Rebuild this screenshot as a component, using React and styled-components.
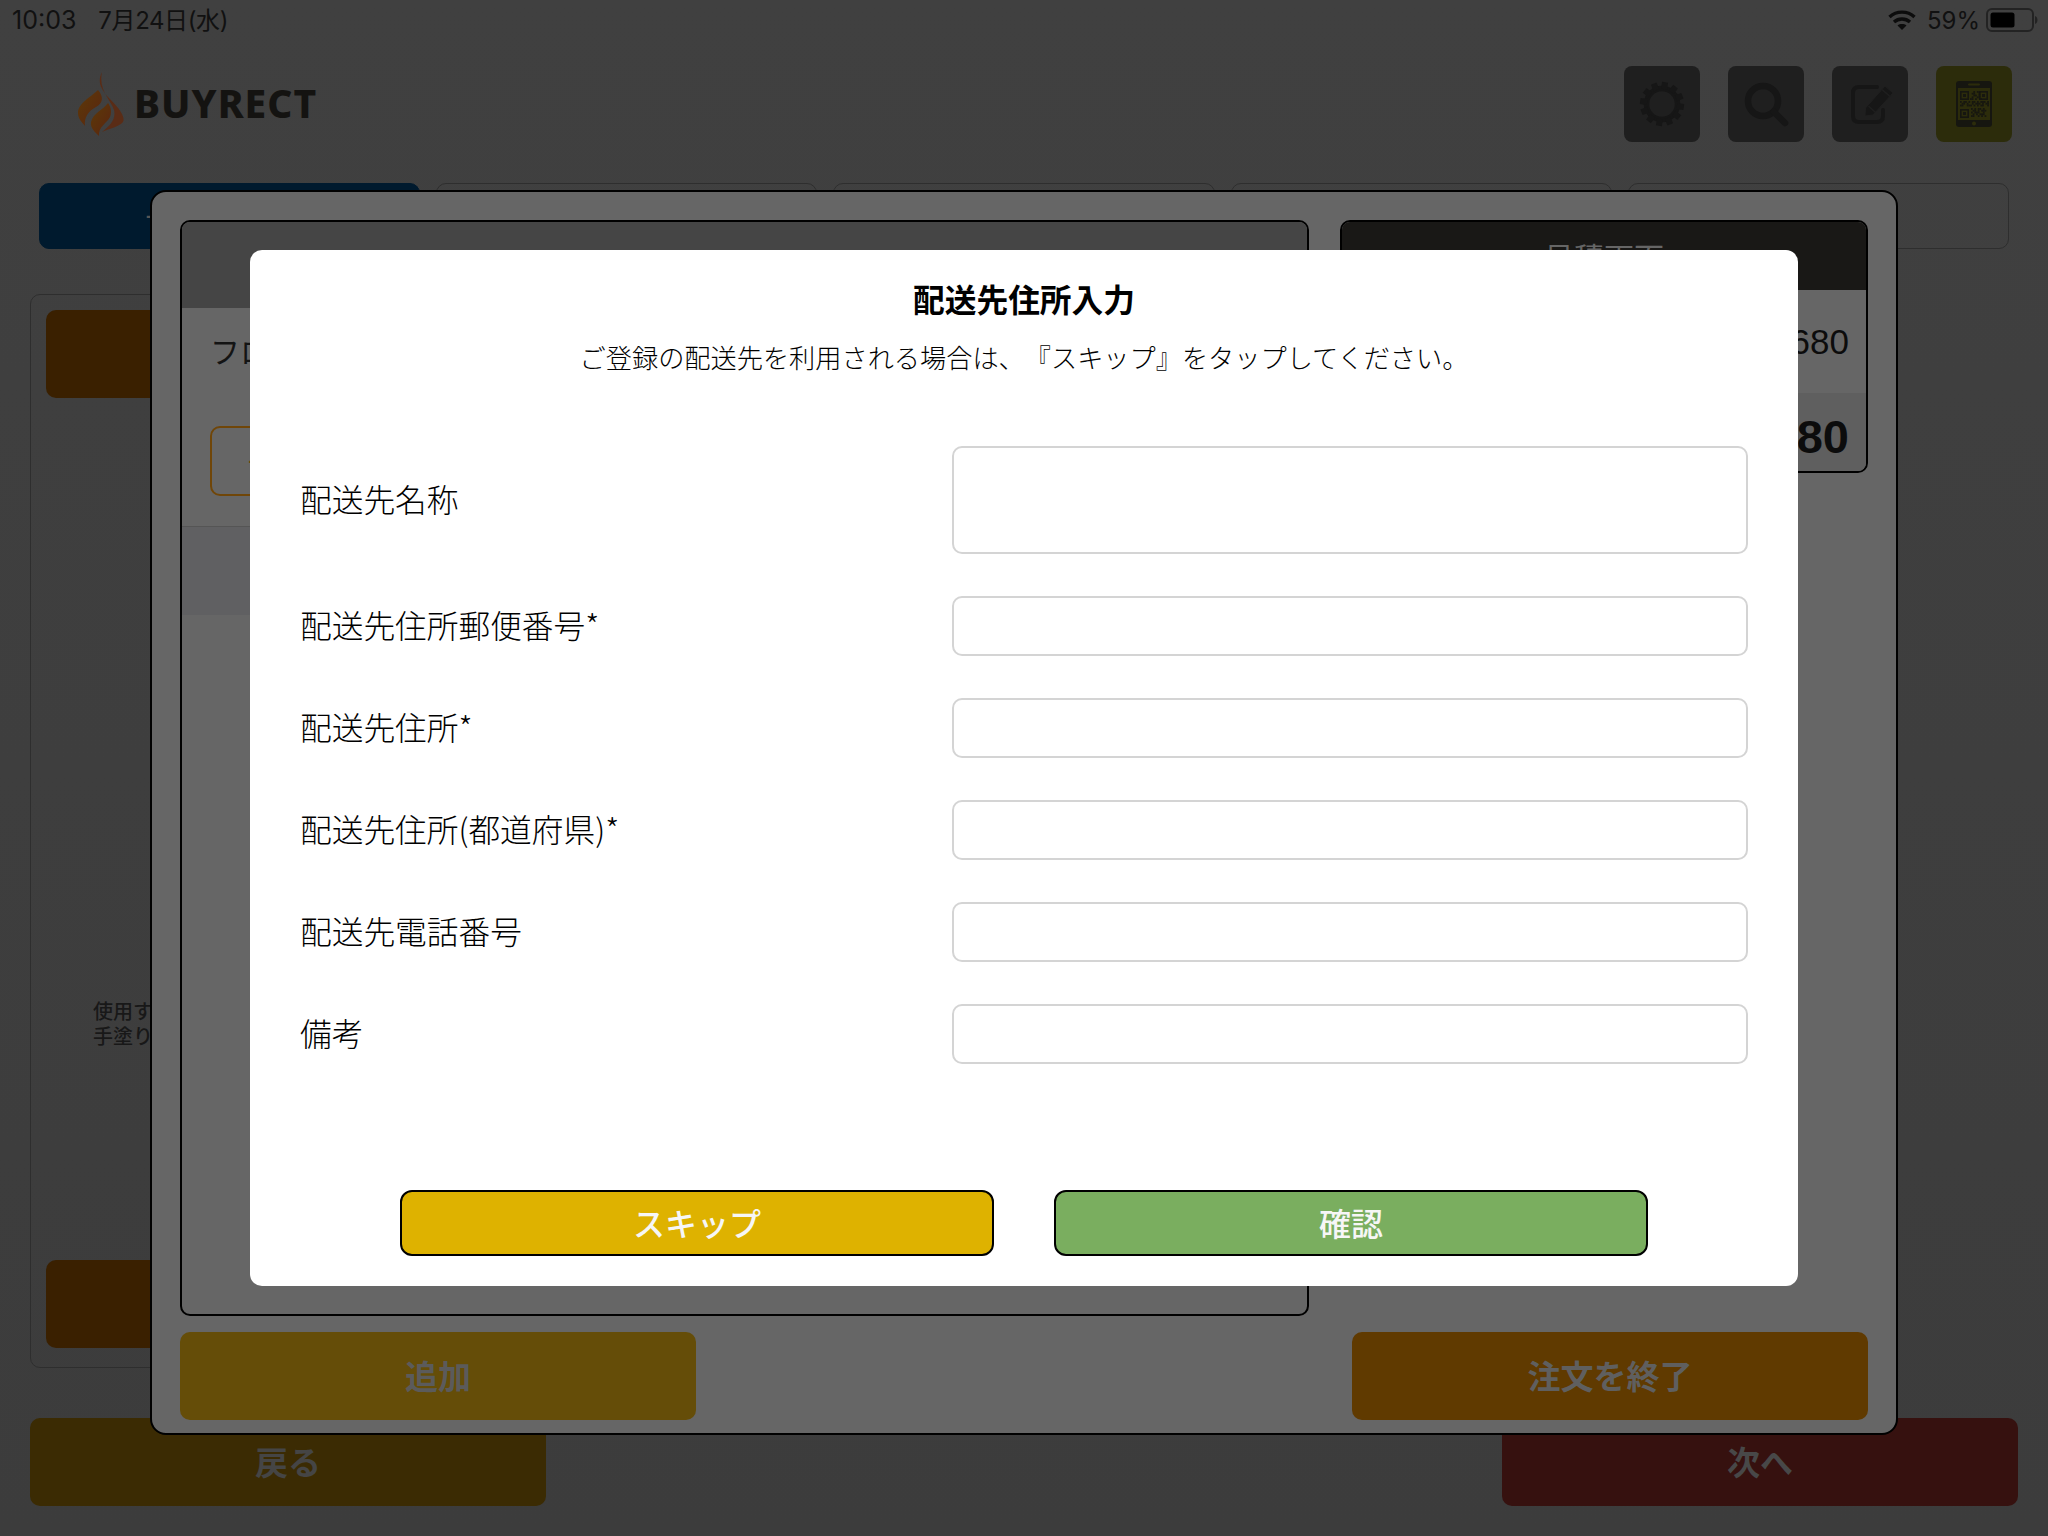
import React from "react";
import styled, { createGlobalStyle } from "styled-components";

const Global = createGlobalStyle`
html, body { margin: 0; padding: 0; background: #3e3e3e; }
* { box-sizing: border-box; }
body { font-family: "Noto Sans CJK JP", "Noto Sans", sans-serif; text-spacing-trim: space-all; font-feature-settings: "palt" 0; }
`;

const Page = styled.div`
position: relative;
width: 2048px;
height: 1536px;
overflow: hidden;
display: flex;
flex-direction: column;
background: linear-gradient(#404040, #3c3c3c);
`;

const StatusBar = styled.div`
height: 40px;
padding: 0 10px 0 12px;
display: flex;
align-items: center;
justify-content: space-between;
color: #111;
font-family: "Inter", "Noto Sans CJK JP", sans-serif;
font-size: 24px;
`;
const StatusLeft = styled.div`
display: flex;
align-items: baseline;
gap: 22px;
line-height: 30px;
font-size: 25px;
`;
const StatusDate = styled.span`
font-size: 24px;
letter-spacing: -0.4px;
`;
const StatusRight = styled.div`
display: flex;
align-items: center;
gap: 6px;
`;
const WifiWrap = styled.span`
display: flex;
margin-right: 5px;
`;

const Header = styled.div`
height: 76px;
margin-top: 26px;
padding: 0 36px 0 78px;
display: flex;
align-items: center;
justify-content: space-between;
`;
const Logo = styled.div`
display: flex;
align-items: center;
gap: 10px;
`;
const LogoText = styled.span`
font-family: "Noto Sans", sans-serif;
font-size: 39px;
line-height: 50px;
padding-bottom: 2px;
font-weight: 800;
letter-spacing: 1px;
color: #141311;
`;
const IconRow = styled.div`
display: flex;
gap: 28px;
`;
const IconButton = styled.div`
width: 76px;
height: 76px;
border-radius: 8px;
background: ${(p) => p.$bg || "#1f1f1f"};
display: flex;
align-items: center;
justify-content: center;
`;

const Tabs = styled.div`
height: 66px;
margin-top: 41px;
padding: 0 39px;
display: grid;
grid-template-columns: repeat(5, 1fr);
gap: 16px;
`;
const Tab = styled.div`
border-radius: 10px;
border: 1px solid ${(p) => (p.$active ? "#001a2e" : "#2e2e2e")};
background: ${(p) => (p.$active ? "#001a2e" : "transparent")};
color: #555;
font-size: 28px;
display: flex;
align-items: center;
justify-content: center;
`;

const Main = styled.div`
height: 1074px;
margin: 45px 0 0 30px;
width: 1000px;
padding: 15px 15px 19px;
border: 1px solid #2e2e2e;
border-radius: 10px;
display: flex;
flex-direction: column;
`;
const MainButton = styled.div`
height: 88px;
border-radius: 10px;
background: #3a2000;
`;
const Note = styled.p`
margin: 600px 0 auto 47px;
font-size: 20px;
line-height: 25px;
font-weight: 500;
color: #181818;
`;

const Footer = styled.div`
height: 88px;
margin-top: 50px;
padding: 0 30px;
display: flex;
justify-content: space-between;
`;
const BigButton = styled.div`
width: 516px;
height: 88px;
padding-bottom: 2px;
border-radius: 10px;
background: ${(p) => p.$bg};
color: ${(p) => p.$color};
font-size: 33px;
font-weight: 700;
display: flex;
align-items: center;
justify-content: center;
`;

const Panel = styled.div`
position: absolute;
left: 150px;
top: 190px;
width: 1748px;
height: 1245px;
padding: 28px 28px 13px;
border: 2px solid #000;
border-radius: 16px;
background: #666;
display: flex;
flex-direction: column;
gap: 16px;
`;
const PanelColumns = styled.div`
height: 1096px;
display: grid;
grid-template-columns: 1129px 528px;
gap: 31px;
align-items: start;
`;
const ListBox = styled.div`
height: 1096px;
border: 2px solid #000;
border-radius: 10px;
overflow: hidden;
`;
const BoxHeader = styled.div`
height: ${(p) => p.$h}px;
background: ${(p) => p.$bg};
color: ${(p) => p.$color};
font-size: 30px;
display: flex;
align-items: center;
justify-content: center;
`;
const ListBody = styled.div`
height: 219px;
padding: 20px 28px 0;
border-bottom: 1px solid #555;
color: #141414;
font-size: 30px;
line-height: 44px;
`;
const OutlineBox = styled.div`
width: 320px;
height: 70px;
margin-top: 54px;
padding-left: 36px;
border: 2px solid #704608;
border-radius: 10px;
color: #704608;
font-size: 28px;
display: flex;
align-items: center;
`;
const ListRow = styled.div`
height: 88px;
background: #606062;
`;
const TotalBox = styled.div`
height: 253px;
border: 2px solid #000;
border-radius: 10px;
overflow: hidden;
`;
const TotalRow = styled.div`
height: ${(p) => p.$h}px;
padding: ${(p) => p.$top || 0}px 17px 0 0;
background: ${(p) => p.$bg};
color: #0c0c0c;
font-family: "Liberation Sans", sans-serif;
font-size: ${(p) => p.$size}px;
font-weight: ${(p) => p.$weight};
display: flex;
align-items: center;
justify-content: flex-end;
`;
const PanelButtons = styled.div`
display: flex;
justify-content: space-between;
`;

const Modal = styled.div`
position: absolute;
left: 250px;
top: 250px;
width: 1548px;
height: 1036px;
padding: 28px 50px 30px;
border-radius: 12px;
background: #fff;
color: #000;
display: flex;
flex-direction: column;
`;
const Title = styled.h2`
margin: 0;
font-size: 31.7px;
line-height: 40px;
font-weight: 700;
text-align: center;
`;
const Lead = styled.p`
margin: 21px 0 0;
font-size: 26.2px;
line-height: 36px;
font-weight: 300;
text-align: center;
`;
const Form = styled.div`
margin-top: 71px;
display: flex;
flex-direction: column;
gap: 42px;
`;
const Row = styled.div`
display: flex;
align-items: center;
justify-content: space-between;
`;
const Label = styled.label`
padding-bottom: 4px;
font-size: 31.7px;
font-weight: 300;
`;
const Field = styled.input`
width: 796px;
height: ${(p) => p.$h || 60}px;
border: 2px solid #d4d4d4;
border-radius: 10px;
background: #fff;
outline: none;
`;
const Actions = styled.div`
margin-top: auto;
display: flex;
justify-content: center;
gap: 60px;
`;
const ActionButton = styled.button`
width: 594px;
height: 66px;
padding: 0 0 3px;
border: 2px solid #000;
border-radius: 12px;
background: ${(p) => p.$bg};
color: #f6f6f6;
font-family: inherit;
font-size: 32px;
font-weight: 500;
`;

const Flame = () => (
  <svg width="46" height="64" viewBox="0 0 46 64">
    <defs>
      <linearGradient id="fl" x1="0" y1="0" x2="1" y2="1">
        <stop offset="0" stopColor="#5c3a08" />
        <stop offset="1" stopColor="#5a2410" />
      </linearGradient>
    </defs>
    <path d="M24 0C19 10 23 17 30 25C39 34 48 44 45 50C41 55 32 56 24 60C33 53 38 47 36 38C33 28 20 18 24 0Z" fill="#5a2c16" />
    <path d="M20 18C13 25 0 31 0 41C0 47 4 50 7 54C6 46 10 39 18 35C25 31 26 25 20 18Z" fill="url(#fl)" />
    <path d="M30 31C25 38 15 41 13 50C12 56 17 60 21 64C20 55 29 51 32 45C34 40 33 35 30 31Z" fill="url(#fl)" />
  </svg>
);

const Gear = () => (
  <svg width="46" height="46" viewBox="0 0 46 46" fill="none" stroke="#161616">
    <circle cx="23" cy="23" r="15.5" strokeWidth="5.5" />
    {Array.from({ length: 12 }).map((_, i) => (
      <line key={i} x1="23" y1="1" x2="23" y2="8" strokeWidth="6" transform={`rotate(${i * 30 + 8} 23 23)`} />
    ))}
  </svg>
);

const Search = () => (
  <svg width="46" height="46" viewBox="0 0 46 46" fill="none" stroke="#161616" strokeLinecap="round">
    <circle cx="20" cy="20" r="15" strokeWidth="6.5" />
    <line x1="31" y1="31" x2="42" y2="42" strokeWidth="6.5" />
  </svg>
);

const Edit = () => (
  <svg width="48" height="46" viewBox="0 0 48 46" fill="none">
    <path d="M31 6H13Q7 6 7 12V35Q7 41 13 41H31Q37 41 37 35V29" stroke="#161616" strokeWidth="4" strokeLinecap="round" />
    <path d="M19 35L19.5 27L39 5L47 12L27 34Z" fill="#161616" stroke="#1f1f1f" strokeWidth="1" />
    <path d="M36 8.5L44 15.5" stroke="#1f1f1f" strokeWidth="1.4" />
    <path d="M22.5 25L29.5 31.5" stroke="#1f1f1f" strokeWidth="1.4" />
  </svg>
);

const qrData = [
  "..#.##.",
  ".##..#.",
  "..##.#.",
  ".#..##.",
  "##.#..#",
];
const qrStrip = [
  "#.##.#.##.#.###.#",
  ".##.#..#.###.#.##",
  "##..###.#.#.##..#",
];
const qrCorner = [
  "#.#.##.#.",
  ".##.#.###",
  "#.###..#.",
  ".#.#.###.",
  "##..#.#.#",
];

const Finder = ({ x, y }) => (
  <g>
    <rect x={x + 0.8} y={y + 0.8} width="7.4" height="7.4" fill="none" stroke="#161610" strokeWidth="1.6" />
    <rect x={x + 3} y={y + 3} width="3" height="3" fill="#161610" />
  </g>
);

const Cells = ({ rows, x, y }) =>
  rows.map((r, j) =>
    r.split("").map((c, i) =>
      c === "#" ? <rect key={`${i}-${j}`} x={x + i * 1.7} y={y + j * 1.8} width="1.7" height="1.8" fill="#161610" /> : null
    )
  );

const QrTablet = () => (
  <svg width="36" height="46" viewBox="0 0 36 46">
    <rect width="36" height="46" rx="3" fill="#161610" />
    <rect x="2" y="7" width="32" height="32" fill="#2c2c0b" />
    <rect x="12" y="2.5" width="12" height="2" rx="1" fill="#2c2c0b" />
    <circle cx="18" cy="42.5" r="2" fill="#2c2c0b" />
    <Finder x={4} y={10} />
    <Finder x={23} y={10} />
    <Finder x={4} y={28} />
    <Cells rows={qrData} x={14} y={10} />
    <Cells rows={qrStrip} x={4} y={20} />
    <Cells rows={qrCorner} x={15} y={27} />
  </svg>
);

const Wifi = () => (
  <svg width="28" height="22" viewBox="0 0 28 22" fill="none" stroke="#0c0c0c" strokeWidth="3.4">
    <path d="M1.5 8C8.5 1.5 19.5 1.5 26.5 8" />
    <path d="M6 13C10.5 9 17.5 9 22 13" />
    <path d="M14 21L9.5 16.5C12 14.6 16 14.6 18.5 16.5Z" fill="#0c0c0c" stroke="none" />
  </svg>
);

const Battery = () => (
  <svg width="52" height="24" viewBox="0 0 52 24">
    <rect x="1" y="1" width="46" height="22" rx="5" fill="none" stroke="#232323" strokeWidth="2" />
    <rect x="4.5" y="4.5" width="24" height="15" rx="2.5" fill="#000" />
    <path d="M49 8C51 9 51.5 10.5 51.5 12C51.5 13.5 51 15 49 16Z" fill="#232323" />
  </svg>
);

const fields = [
  { label: "配送先名称", h: 108 },
  { label: "配送先住所郵便番号*" },
  { label: "配送先住所*" },
  { label: "配送先住所(都道府県)*" },
  { label: "配送先電話番号" },
  { label: "備考" },
];

export default function App() {
  return (
    <Page>
      <Global />
      <StatusBar>
        <StatusLeft>
          <span>10:03</span>
          <StatusDate>7月24日(水)</StatusDate>
        </StatusLeft>
        <StatusRight>
          <WifiWrap><Wifi /></WifiWrap>
          <span>59%</span>
          <Battery />
        </StatusRight>
      </StatusBar>

      <Header>
        <Logo>
          <Flame />
          <LogoText>BUYRECT</LogoText>
        </Logo>
        <IconRow>
          <IconButton><Gear /></IconButton>
          <IconButton><Search /></IconButton>
          <IconButton><Edit /></IconButton>
          <IconButton $bg="#2c2c0b"><QrTablet /></IconButton>
        </IconRow>
      </Header>

      <Tabs>
        <Tab $active>一般注文入力</Tab>
        <Tab />
        <Tab />
        <Tab />
        <Tab />
      </Tabs>

      <Main>
        <MainButton />
        <Note>
          使用する塗料<br />
          手塗りの場合
        </Note>
        <MainButton />
      </Main>

      <Footer>
        <BigButton $bg="#3b2b03" $color="#454545">戻る</BigButton>
        <BigButton $bg="#36110f" $color="#484848">次へ</BigButton>
      </Footer>

      <Panel>
        <PanelColumns>
          <ListBox>
            <BoxHeader $h={86} $bg="#454545" $color="#333">商品選択</BoxHeader>
            <ListBody>
              フロー
              <OutlineBox>一</OutlineBox>
            </ListBody>
            <ListRow />
          </ListBox>
          <TotalBox>
            <BoxHeader $h={68} $bg="#191816" $color="#666">見積画面</BoxHeader>
            <TotalRow $h={103} $bg="#666" $size={35} $weight={400}>¥1,680</TotalRow>
            <TotalRow $h={78} $bg="#5f5f5f" $size={47} $weight={700} $top={8}>¥1,680</TotalRow>
          </TotalBox>
        </PanelColumns>
        <PanelButtons>
          <BigButton $bg="#654d08" $color="#5b5b5b">追加</BigButton>
          <BigButton $bg="#603a00" $color="#5f5f5f">注文を終了</BigButton>
        </PanelButtons>
      </Panel>

      <Modal>
        <Title>配送先住所入力</Title>
        <Lead>ご登録の配送先を利用される場合は、『スキップ』をタップしてください。</Lead>
        <Form>
          {fields.map((f) => (
            <Row key={f.label}>
              <Label>{f.label}</Label>
              <Field $h={f.h} />
            </Row>
          ))}
        </Form>
        <Actions>
          <ActionButton $bg="#deb200">スキップ</ActionButton>
          <ActionButton $bg="#7aae5f">確認</ActionButton>
        </Actions>
      </Modal>
    </Page>
  );
}
